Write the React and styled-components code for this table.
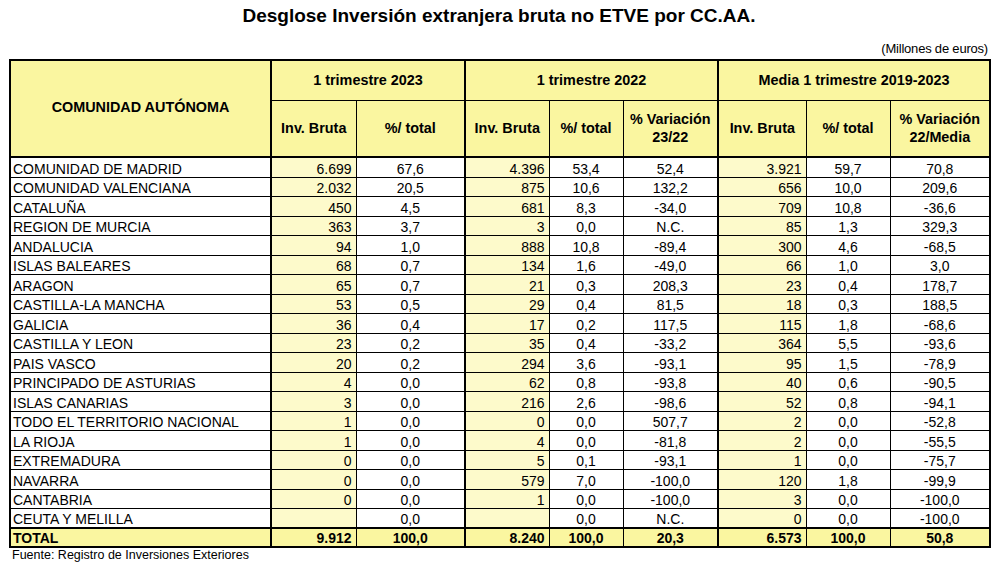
import React from "react";
import styled, { createGlobalStyle } from "styled-components";

const Global = createGlobalStyle`
  html, body { margin: 0; padding: 0; background: #fff; }
  body { font-family: "Liberation Sans", Arial, sans-serif; color: #000; }
`;

const HEAD = "#faf6a0";
const LIGHT = "#fdfacb";

const Page = styled.div`
  width: 1000px;
  height: 567px;
  padding: 5px 11px 0 9px;
  box-sizing: border-box;
  display: flex;
  flex-direction: column;
`;

const Title = styled.h1`
  margin: 0;
  font-size: 19px;
  line-height: 22px;
  font-weight: bold;
  text-align: center;
`;

const Units = styled.div`
  margin-top: 15px;
  font-size: 13px;
  line-height: 14px;
  text-align: right;
  padding-right: 1px;
  letter-spacing: -0.2px;
`;

const Table = styled.table`
  margin-top: 3px;
  border-collapse: collapse;
  table-layout: fixed;
  width: 980px;
  border: 2px solid #000;
`;

const HeadCell = styled.th`
  background: ${HEAD};
  font-weight: bold;
  font-size: 14.4px;
  line-height: 18px;
  text-align: center;
  vertical-align: middle;
  padding: 0 2px;
  border: 1px solid #000;
  border-left-width: ${(p) => (p.$group ? "2px" : "1px")};
  border-bottom-width: ${(p) => (p.$bottom ? "2px" : "1px")};
`;

const Cell = styled.td`
  background: ${(p) => (p.$total ? HEAD : p.$light ? LIGHT : "#fff")};
  font-size: 14px;
  line-height: 16px;
  font-weight: ${(p) => (p.$total ? "bold" : "normal")};
  text-align: ${(p) => p.$align};
  padding: 0 ${(p) => (p.$align === "right" ? "4px" : "1px")} 0 ${(p) => (p.$align === "left" ? "2px" : "1px")};
  vertical-align: bottom;
  white-space: nowrap;
  overflow: hidden;
  border: 1px solid #000;
  border-left-width: ${(p) => (p.$group ? "2px" : "1px")};
  border-top-width: ${(p) => (p.$total ? "2px" : "1px")};
`;

const Row = styled.tr`
  height: ${(p) => p.$h}px;
`;

const HeadLabel = styled.div`
  margin-top: -4px;
`;

const Source = styled.div`
  font-size: 12.5px;
  line-height: 14px;
  padding-left: 3px;
  margin-top: 0;
`;

const rows = [
  ["COMUNIDAD DE MADRID", "6.699", "67,6", "4.396", "53,4", "52,4", "3.921", "59,7", "70,8"],
  ["COMUNIDAD VALENCIANA", "2.032", "20,5", "875", "10,6", "132,2", "656", "10,0", "209,6"],
  ["CATALUÑA", "450", "4,5", "681", "8,3", "-34,0", "709", "10,8", "-36,6"],
  ["REGION DE MURCIA", "363", "3,7", "3", "0,0", "N.C.", "85", "1,3", "329,3"],
  ["ANDALUCIA", "94", "1,0", "888", "10,8", "-89,4", "300", "4,6", "-68,5"],
  ["ISLAS BALEARES", "68", "0,7", "134", "1,6", "-49,0", "66", "1,0", "3,0"],
  ["ARAGON", "65", "0,7", "21", "0,3", "208,3", "23", "0,4", "178,7"],
  ["CASTILLA-LA MANCHA", "53", "0,5", "29", "0,4", "81,5", "18", "0,3", "188,5"],
  ["GALICIA", "36", "0,4", "17", "0,2", "117,5", "115", "1,8", "-68,6"],
  ["CASTILLA Y LEON", "23", "0,2", "35", "0,4", "-33,2", "364", "5,5", "-93,6"],
  ["PAIS VASCO", "20", "0,2", "294", "3,6", "-93,1", "95", "1,5", "-78,9"],
  ["PRINCIPADO DE ASTURIAS", "4", "0,0", "62", "0,8", "-93,8", "40", "0,6", "-90,5"],
  ["ISLAS CANARIAS", "3", "0,0", "216", "2,6", "-98,6", "52", "0,8", "-94,1"],
  ["TODO EL TERRITORIO NACIONAL", "1", "0,0", "0", "0,0", "507,7", "2", "0,0", "-52,8"],
  ["LA RIOJA", "1", "0,0", "4", "0,0", "-81,8", "2", "0,0", "-55,5"],
  ["EXTREMADURA", "0", "0,0", "5", "0,1", "-93,1", "1", "0,0", "-75,7"],
  ["NAVARRA", "0", "0,0", "579", "7,0", "-100,0", "120", "1,8", "-99,9"],
  ["CANTABRIA", "0", "0,0", "1", "0,0", "-100,0", "3", "0,0", "-100,0"],
  ["CEUTA Y MELILLA", "", "0,0", "", "0,0", "N.C.", "0", "0,0", "-100,0"],
];
const total = ["TOTAL", "9.912", "100,0", "8.240", "100,0", "20,3", "6.573", "100,0", "50,8"];

const widths = [261, 85, 109, 84, 74, 95, 88, 84, 100];
const lightCols = [1, 3, 6];
const groupCols = [1, 3, 6];

function DataRow({ data, index, isTotal }) {
  return (
    <Row $h={index % 2 === 0 ? 20 : 19}>
      {data.map((v, i) => (
        <Cell
          key={i}
          $align={i === 0 ? "left" : lightCols.includes(i) ? "right" : "center"}
          $light={lightCols.includes(i)}
          $group={groupCols.includes(i)}
          $total={isTotal}
        >
          {v}
        </Cell>
      ))}
    </Row>
  );
}

export default function App() {
  return (
    <>
      <Global />
      <Page>
        <Title>Desglose Inversión extranjera bruta no ETVE por CC.AA.</Title>
        <Units>(Millones de euros)</Units>
        <Table>
          <colgroup>
            {widths.map((w, i) => (
              <col key={i} style={{ width: w }} />
            ))}
          </colgroup>
          <thead>
            <Row $h={40}>
              <HeadCell rowSpan={2} $bottom>
                <HeadLabel>COMUNIDAD AUTÓNOMA</HeadLabel>
              </HeadCell>
              <HeadCell colSpan={2} $group>1 trimestre 2023</HeadCell>
              <HeadCell colSpan={3} $group>1 trimestre 2022</HeadCell>
              <HeadCell colSpan={3} $group>Media 1 trimestre 2019-2023</HeadCell>
            </Row>
            <Row $h={57}>
              <HeadCell $group $bottom>Inv. Bruta</HeadCell>
              <HeadCell $bottom>%/ total</HeadCell>
              <HeadCell $group $bottom>Inv. Bruta</HeadCell>
              <HeadCell $bottom>%/ total</HeadCell>
              <HeadCell $bottom>% Variación<br />23/22</HeadCell>
              <HeadCell $group $bottom>Inv. Bruta</HeadCell>
              <HeadCell $bottom>%/ total</HeadCell>
              <HeadCell $bottom>% Variación<br />22/Media</HeadCell>
            </Row>
          </thead>
          <tbody>
            {rows.map((r, i) => (
              <DataRow key={i} data={r} index={i} />
            ))}
            <DataRow data={total} index={19} isTotal />
          </tbody>
        </Table>
        <Source>Fuente: Registro de Inversiones Exteriores</Source>
      </Page>
    </>
  );
}
